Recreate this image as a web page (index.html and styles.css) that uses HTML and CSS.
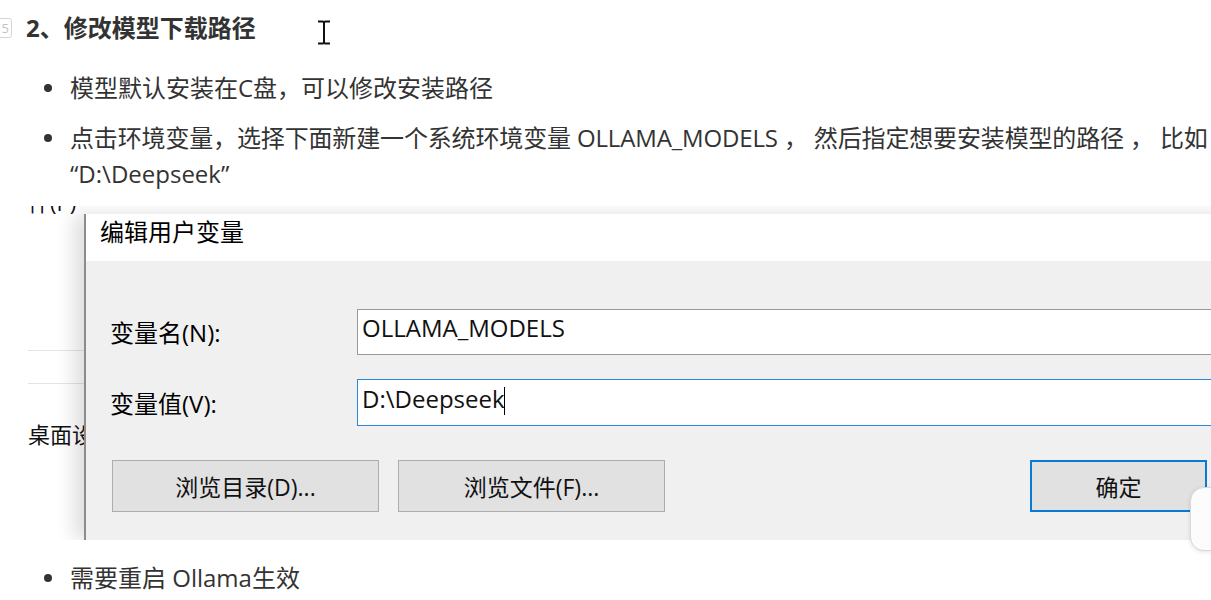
FILE: index.html
```html
<!DOCTYPE html>
<html lang="zh-CN">
<head>
<meta charset="utf-8">
<title>修改模型下载路径</title>
<link rel="stylesheet" href="styles.css">
</head>
<body>
<div class="page">
  <div class="h-row">
    <span class="hnum">5</span>
    <h2 class="heading">2、修改模型下载路径</h2>
  </div>
  <svg class="ibeam" width="14" height="25" viewBox="0 0 14 25"><path d="M1 1.5 H5.5 Q7 1.5 7 3 Q7 1.5 8.5 1.5 H13 M7 3 V22 M1 23.5 H5.5 Q7 23.5 7 22 Q7 23.5 8.5 23.5 H13" fill="none" stroke="#111" stroke-width="2"/></svg>

  <ul class="list top-list">
    <li><span class="txt">模型默认安装在C盘，可以修改安装路径</span></li>
    <li><span class="txt"><span class="nowrap">点击环境变量，选择下面新建一个系统环境变量 OLLAMA_MODELS ， 然后指定想要安装模型的路径 ， 比如</span><br>“D:\Deepseek”</span></li>
  </ul>

  <div class="shot">
    <div class="bgapp">
      <div class="bg-clip"><span>件(P)</span></div>
      <div class="bg-line line1"></div>
      <div class="bg-line line2"></div>
      <div class="bg-text">桌面设置</div>
    </div>
    <div class="dialog">
      <div class="titlebar">编辑用户变量</div>
      <div class="dbody">
        <div class="field">
          <span class="label">变量名(N):</span>
          <div class="input">OLLAMA_MODELS</div>
        </div>
        <div class="field">
          <span class="label">变量值(V):</span>
          <div class="input focus">D:\Deepseek<span class="caret"></span></div>
        </div>
        <div class="btns">
          <button class="btn">浏览目录(D)...</button>
          <button class="btn">浏览文件(F)...</button>
          <button class="btn ok">确定</button>
        </div>
      </div>
    </div>
  </div>

  <ul class="list bottom-list">
    <li><span class="txt">需要重启 Ollama生效</span></li>
  </ul>

  <div class="widget"></div>
</div>
</body>
</html>
```

FILE: styles.css
```css
html, body {
  margin: 0;
  padding: 0;
  width: 1211px;
  height: 600px;
  overflow: hidden;
  background: #fff;
}

body {
  font-family: "Open Sans", "Noto Sans CJK SC", sans-serif;
  color: #333;
}

.page {
  position: relative;
  padding-top: 10px;
}

.h-row {
  display: flex;
  align-items: center;
  height: 36px;
}

.hnum {
  box-sizing: border-box;
  width: 18px;
  height: 20px;
  margin-left: -6px;
  border: 1px solid #d4d4d4;
  border-radius: 3px;
  color: #c4c4c4;
  font-size: 13px;
  line-height: 18px;
  text-align: right;
  padding-right: 2px;
}

.heading {
  margin: 0 0 0 14px;
  font-size: 24px;
  line-height: 36px;
  font-weight: 700;
  color: #333;
}

.ibeam {
  position: absolute;
  left: 317px;
  top: 20px;
}

.list {
  list-style: none;
  margin: 0;
  padding: 0;
  display: flex;
  flex-direction: column;
  gap: 14px;
}

.top-list {
  margin-top: 24px;
}

.bottom-list {
  margin-top: 20px;
}

.list li {
  display: flex;
  font-size: 24px;
  line-height: 36px;
  color: #333;
}

.list li::before {
  content: "";
  flex: none;
  width: 8px;
  height: 8px;
  border-radius: 50%;
  background: #333;
  margin: 14px 18px 0 44px;
}

.txt {
  min-width: 0;
}

.nowrap {
  white-space: nowrap;
  letter-spacing: -0.15px;
}

.shot {
  display: flex;
  margin-top: 14px;
  height: 334px;
  overflow: hidden;
}

.bgapp {
  flex: none;
  width: 84px;
  background: #fff;
  overflow: hidden;
  display: flex;
  flex-direction: column;
}

.bg-clip {
  height: 8px;
  overflow: hidden;
  padding-left: 28px;
}

.bg-clip span {
  display: block;
  margin-top: -17px;
  font-size: 22px;
  line-height: 26px;
  color: #111;
  white-space: nowrap;
}

.bg-line {
  height: 1px;
  background: #e4e4e4;
  margin-left: 28px;
}

.line1 { margin-top: 136px; }
.line2 { margin-top: 32px; }

.bg-text {
  margin-top: 35px;
  margin-left: 28px;
  font-size: 22px;
  line-height: 30px;
  color: #111;
  white-space: nowrap;
}

.dialog {
  flex: none;
  position: relative;
  z-index: 1;
  width: 1200px;
  margin-top: 8px;
  border-left: 2px solid #8c8c8c;
  background: #f0f0f0;
  box-shadow: -10px 0 18px rgba(0, 0, 0, 0.13);
  color: #000;
  display: flex;
  flex-direction: column;
}

.titlebar {
  height: 47px;
  background: #fff;
  padding-left: 14px;
  font-size: 24px;
  line-height: 36px;
}

.dbody {
  padding: 48px 0 28px 24px;
  display: flex;
  flex-direction: column;
  gap: 24px;
}

.field {
  display: grid;
  grid-template-columns: 247px 900px;
  align-items: center;
}

.label {
  font-size: 24px;
  line-height: 36px;
  padding-top: 2px;
}

.input {
  height: 44px;
  border: 1px solid #9a9a9a;
  background: #fff;
  padding-left: 4px;
  font-size: 24px;
  line-height: 36px;
  color: #111;
}

.input.focus {
  height: 45px;
  border-color: #2b87da;
  line-height: 38px;
}

.caret {
  display: inline-block;
  width: 1px;
  height: 28px;
  background: #000;
  vertical-align: -7px;
  margin-left: -1px;
}

.btns {
  display: flex;
  gap: 19px;
  width: 1095px;
  margin: 10px 0 0 2px;
}

.btn {
  box-sizing: border-box;
  width: 267px;
  height: 52px;
  background: #e1e1e1;
  border: 1px solid #adadad;
  font-family: "Open Sans", "Noto Sans CJK SC", sans-serif;
  font-size: 23px;
  color: #111;
  padding: 0;
}

.btn.ok {
  width: 177px;
  margin-left: auto;
  border: 2px solid #0a78d4;
}

.widget {
  position: absolute;
  left: 1190px;
  top: 487px;
  width: 50px;
  height: 62px;
  background: #fcfcfc;
  border: 1px solid #d8d8d8;
  border-radius: 14px 0 0 14px;
  box-shadow: 0 1px 4px rgba(0, 0, 0, 0.12);
  z-index: 2;
}
```
